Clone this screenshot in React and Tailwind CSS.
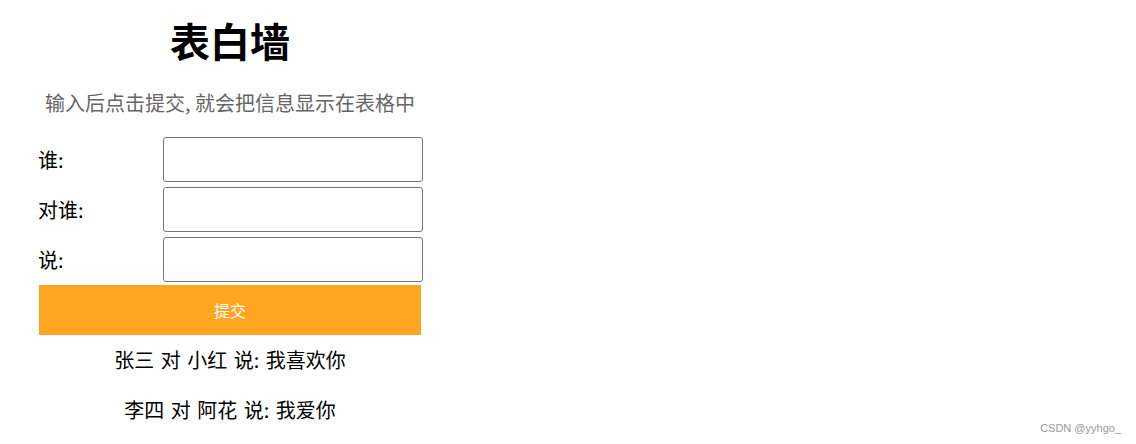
export default function App() {
  const rows = [
    { id: 'from', label: '谁:' },
    { id: 'to', label: '对谁:' },
    { id: 'msg', label: '说:' },
  ];
  const messages = ['张三 对 小红 说: 我喜欢你', '李四 对 阿花 说: 我爱你'];

  return (
    <div className="relative w-[1136px] h-[444px] bg-white font-['Noto_Sans_CJK_SC',sans-serif] text-black">
      <div className="w-[400px] ml-[30px]">
        <h1 className="pt-[15px] text-[40px] leading-[50px] font-bold text-center">表白墙</h1>
        <p className="mt-[13px] text-[20px] leading-[50px] text-[#666] text-center">
          输入后点击提交, 就会把信息显示在表格中
        </p>
        <div className="mt-[9px] flex flex-col gap-[5px]">
          {rows.map((row) => (
            <div key={row.id} className="flex items-center">
              <label className="w-[133px] pl-[8px] text-[20px] leading-[45px]">{row.label}</label>
              <input
                type="text"
                className="w-[260px] h-[45px] border border-[#767676] rounded-[3px] bg-white"
              />
            </div>
          ))}
        </div>
        <button className="mt-[3px] ml-[9px] w-[382px] h-[50px] bg-[#fea621] text-white text-[16px]">
          提交
        </button>
        <div>
          {messages.map((m, i) => (
            <p key={i} className="text-[20px] leading-[50px] text-center [word-spacing:2px]">
              {m}
            </p>
          ))}
        </div>
      </div>
      <span className="absolute right-[15px] bottom-[8px] text-[11px] text-[#999] font-['Liberation_Sans',sans-serif]">
        CSDN @yyhgo_
      </span>
    </div>
  );
}
